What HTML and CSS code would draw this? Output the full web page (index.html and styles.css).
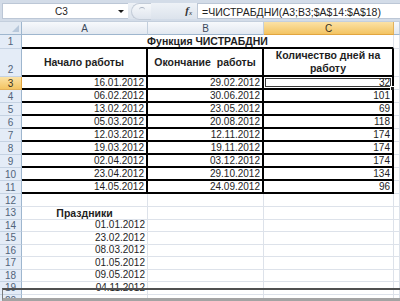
FILE: index.html
```html
<!DOCTYPE html>
<html lang="ru">
<head>
<meta charset="utf-8">
<title>ЧИСТРАБДНИ</title>
<link rel="stylesheet" href="styles.css">
</head>
<body>
<div class="app">
  <div class="fbar">
    <div class="namebox"><span class="ref">C3</span><span class="dd"></span></div>
    <div class="fxzone"><span class="knob"><span class="knob-mark"></span></span><span class="fx"><i>f</i><sub>x</sub></span></div>
    <div class="finput">=ЧИСТРАБДНИ(A3;B3;$A$14:$A$18)</div>
  </div>

  <div class="sheet">
    <div class="row hdr">
      <div class="corner"><span class="tri"></span></div>
      <div class="ch">A</div>
      <div class="ch">B</div>
      <div class="ch sel">C</div>
      <div class="ch"></div>
    </div>

    <div class="row r1">
      <div class="rh">1</div>
      <div class="c merged bold center tb">Функция ЧИСТРАБДНИ</div>
      <div class="c"></div>
    </div>

    <div class="row r2">
      <div class="rh bottom">2</div>
      <div class="c t bold center">Начало работы</div>
      <div class="c t bold center">Окончание&nbsp; работы</div>
      <div class="c t bold center wrap">Количество дней на работу</div>
      <div class="c"></div>
    </div>

    <div class="row r13"><div class="rh sel">3</div><div class="c t num">16.01.2012</div><div class="c t num">29.02.2012</div><div class="c t num active">32<span class="handle"></span></div><div class="c"></div></div>
    <div class="row r13"><div class="rh">4</div><div class="c t num">06.02.2012</div><div class="c t num">30.06.2012</div><div class="c t num">101</div><div class="c"></div></div>
    <div class="row r13"><div class="rh">5</div><div class="c t num">13.02.2012</div><div class="c t num">23.05.2012</div><div class="c t num">69</div><div class="c"></div></div>
    <div class="row r13"><div class="rh">6</div><div class="c t num">05.03.2012</div><div class="c t num">20.08.2012</div><div class="c t num">118</div><div class="c"></div></div>
    <div class="row r13"><div class="rh">7</div><div class="c t num">12.03.2012</div><div class="c t num">12.11.2012</div><div class="c t num">174</div><div class="c"></div></div>
    <div class="row r13"><div class="rh">8</div><div class="c t num">19.03.2012</div><div class="c t num">19.11.2012</div><div class="c t num">174</div><div class="c"></div></div>
    <div class="row r13"><div class="rh">9</div><div class="c t num">02.04.2012</div><div class="c t num">03.12.2012</div><div class="c t num">174</div><div class="c"></div></div>
    <div class="row r13"><div class="rh">10</div><div class="c t num">23.04.2012</div><div class="c t num">29.10.2012</div><div class="c t num">134</div><div class="c"></div></div>
    <div class="row r13"><div class="rh">11</div><div class="c t num">14.05.2012</div><div class="c t num">24.09.2012</div><div class="c t num">96</div><div class="c"></div></div>
    <div class="row r13"><div class="rh">12</div><div class="c"></div><div class="c"></div><div class="c"></div><div class="c"></div></div>

    <div class="row r12"><div class="rh">13</div><div class="c bold center">Праздники</div><div class="c"></div><div class="c"></div><div class="c"></div></div>
    <div class="row r12"><div class="rh">14</div><div class="c num">01.01.2012</div><div class="c"></div><div class="c"></div><div class="c"></div></div>
    <div class="row r12"><div class="rh">15</div><div class="c num">23.02.2012</div><div class="c"></div><div class="c"></div><div class="c"></div></div>
    <div class="row r12"><div class="rh">16</div><div class="c num">08.03.2012</div><div class="c"></div><div class="c"></div><div class="c"></div></div>
    <div class="row r12"><div class="rh">17</div><div class="c num">01.05.2012</div><div class="c"></div><div class="c"></div><div class="c"></div></div>
    <div class="row r12"><div class="rh">18</div><div class="c num">09.05.2012</div><div class="c"></div><div class="c"></div><div class="c"></div></div>
    <div class="row r12"><div class="rh">19</div><div class="c num">04.11.2012</div><div class="c"></div><div class="c"></div><div class="c"></div></div>
    <div class="row r12"><div class="rh">20</div><div class="c"></div><div class="c"></div><div class="c"></div><div class="c"></div></div>
  </div>

  <div class="frame"></div>
</div>
</body>
</html>
```

FILE: styles.css
```css
* { box-sizing: border-box; }

html, body {
  margin: 0;
  padding: 0;
  background: #ffffff;
}

body {
  font-family: "Liberation Sans", Arial, sans-serif;
  color: #1e1e1e;
  width: 400px;
  height: 301px;
  overflow: hidden;
}

.app {
  position: relative;
  width: 400px;
  height: 301px;
  overflow: hidden;
}

/* ---------- formula bar ---------- */
.fbar {
  display: flex;
  height: 22px;
  padding: 3px 0 2px 2px;
  background: #d3dce8;
  border-bottom: 1px solid #c4cfdd;
}

.namebox {
  width: 126px;
  display: flex;
  align-items: center;
  background: #ffffff;
  border: 1px solid #bcc7d6;
  border-right: none;
}

.ref {
  flex: 1;
  text-align: center;
  font-size: 10px;
  color: #222;
  padding-left: 2px;
}

.dd {
  width: 0;
  height: 0;
  margin-right: 4px;
  border-left: 3px solid transparent;
  border-right: 3px solid transparent;
  border-top: 3px solid #1a1a1a;
}

.fxzone {
  width: 69px;
  display: flex;
  align-items: center;
  justify-content: space-between;
  padding-left: 3px;
  background: linear-gradient(#eef2f7, #dce3ec);
}

.knob {
  width: 20px;
  height: 17px;
  border-radius: 9px 0 0 9px;
  background: linear-gradient(#f7f9fb, #dfe5ee);
  border: 1px solid #c3ccd8;
  border-right: none;
  display: flex;
  justify-content: center;
  padding-top: 3px;
}

.knob-mark {
  width: 6px;
  height: 4px;
  border-top: 1px solid #a9b3c0;
  border-radius: 4px 4px 0 0;
}

.fx {
  font-family: "Liberation Serif", "Times New Roman", serif;
  font-size: 11px;
  color: #333;
  padding-right: 5px;
  line-height: 1;
}

.fx i { font-weight: bold; }

.fx sub {
  font-size: 7px;
  font-style: italic;
  vertical-align: -1px;
}

.finput {
  flex: 1;
  background: #ffffff;
  border: 1px solid #bcc7d6;
  border-right: none;
  font-size: 10.5px;
  color: #222;
  padding: 2px 0 0 4px;
  white-space: nowrap;
  overflow: hidden;
}

/* ---------- sheet ---------- */
.sheet {
  display: flex;
  flex-direction: column;
}

.row {
  display: grid;
  grid-template-columns: 22px 126px 116px 130px 1fr;
}

.hdr { height: 13px; }
.r1 { height: 14px; }
.r2 { height: 28px; }
.r13 { height: 13px; }
.r12 { height: 12.5px; }

.corner {
  background: #e3eaf3;
  border-right: 1px solid #9eb6ce;
  border-bottom: 1px solid #9eb6ce;
  position: relative;
}

.tri {
  position: absolute;
  right: 2px;
  bottom: 2px;
  width: 0;
  height: 0;
  border-left: 7px solid transparent;
  border-bottom: 7px solid #b8c8db;
}

.ch {
  background: linear-gradient(#f7f9fc, #e2e8f0);
  border-right: 1px solid #c3cfdd;
  border-bottom: 1px solid #9eb6ce;
  font-size: 10px;
  color: #3b4a5c;
  display: flex;
  align-items: center;
  justify-content: center;
}

.ch.sel {
  background: linear-gradient(#fbe2a6, #f3c462);
  border-right-color: #e2b15c;
  border-bottom-color: #e2a53f;
  color: #3a3322;
}

.rh {
  background: #e4ecf7;
  border-right: 1px solid #9eb6ce;
  border-bottom: 1px solid #c5d2e2;
  font-size: 10px;
  color: #52647a;
  display: flex;
  align-items: center;
  justify-content: center;
}

.rh.bottom { align-items: flex-end; padding-bottom: 1px; }

.rh.sel {
  background: linear-gradient(#fbe2a6, #f3c462);
  border-bottom-color: #e2b15c;
  border-right-color: #e2a53f;
  color: #3a3322;
}

.c {
  position: relative;
  border-right: 1px solid #dde2ea;
  border-bottom: 1px solid #dde2ea;
  font-size: 10px;
  line-height: 1;
  color: #1e1e1e;
  display: flex;
  align-items: center;
  padding: 0 2px;
  white-space: nowrap;
  overflow: visible;
}

.merged { grid-column: 2 / span 3; }

.bold { font-weight: bold; font-size: 10.5px; }
.center { justify-content: center; text-align: center; }
.num { justify-content: flex-end; }

.tb { border-bottom: 2px solid #000; }

.t {
  border-right: 2px solid #000;
  border-bottom: 2px solid #000;
}

.wrap {
  white-space: normal;
  line-height: 13px;
  padding: 0 4px;
}

.active {
  box-shadow: inset 0 0 0 1px #ffffff, inset 0 0 0 2px #3a3a3a;
}

.handle {
  position: absolute;
  right: -3px;
  bottom: -3px;
  width: 5px;
  height: 5px;
  background: #222;
  border: 1px solid #fff;
}

/* ---------- window edge at bottom ---------- */
.frame {
  position: absolute;
  left: 2px;
  right: 0;
  top: 288px;
  bottom: 0;
  border-top: 2px solid #505050;
  border-left: 1px solid #7a7a7a;
  border-bottom: 3px solid #a3a3a3;
  pointer-events: none;
}
```
